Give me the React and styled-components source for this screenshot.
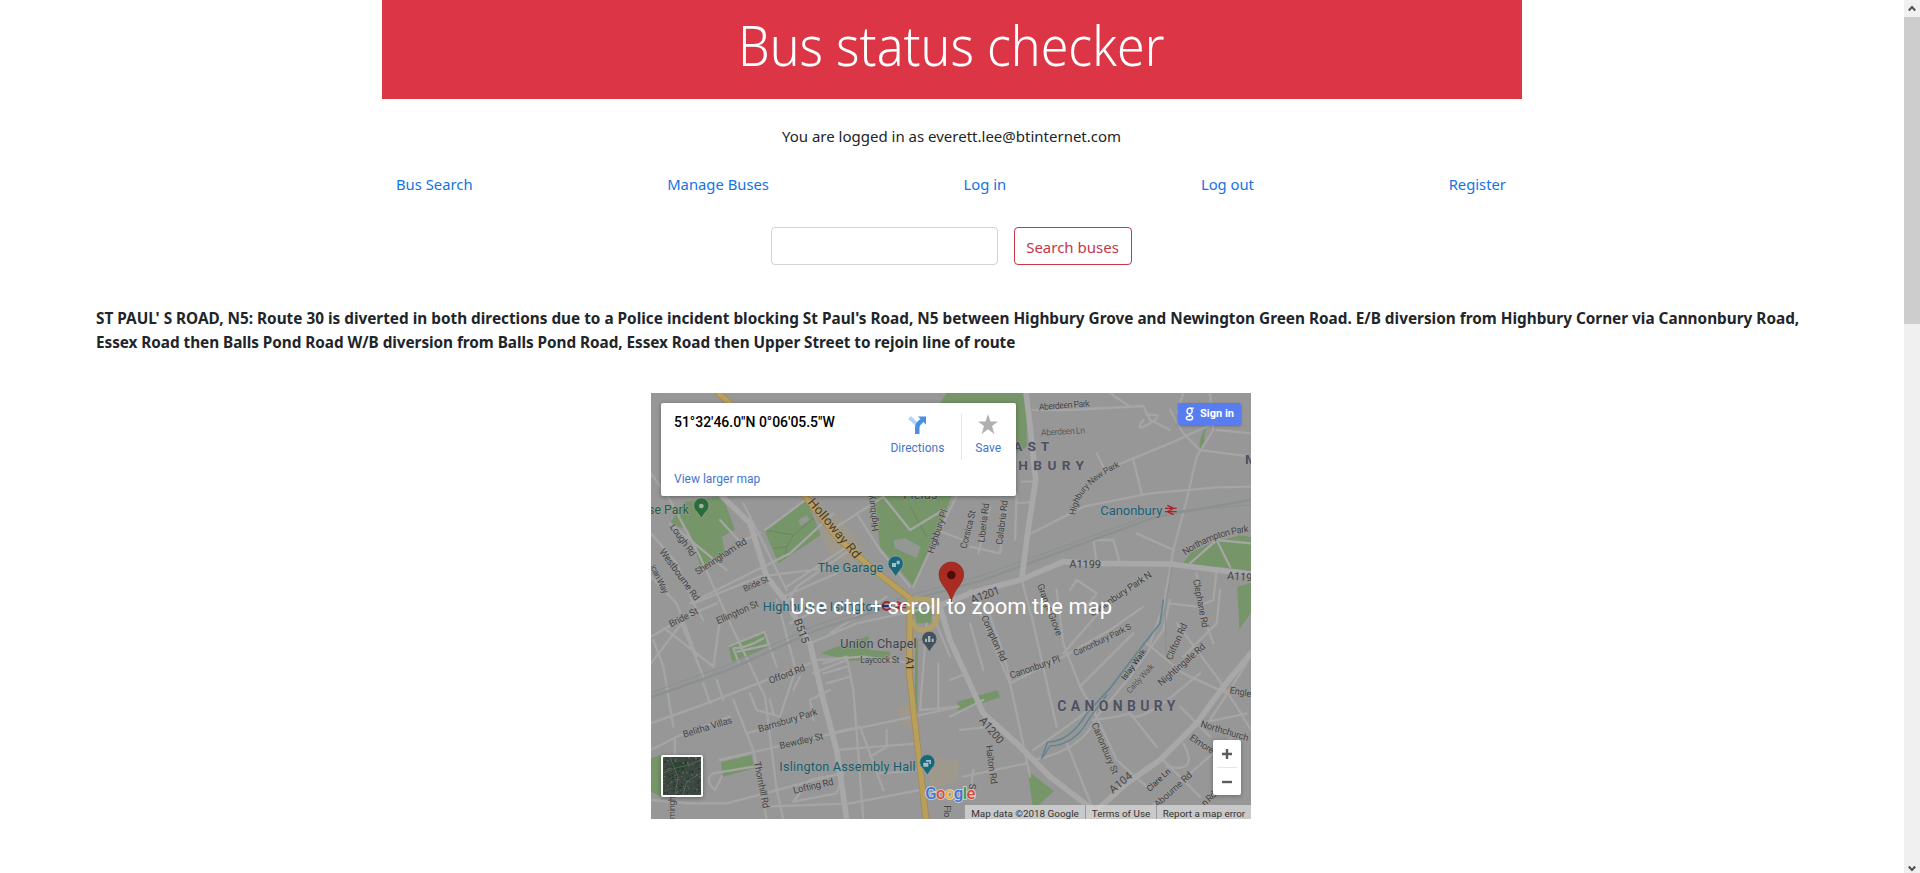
import React from 'react';
import styled, { createGlobalStyle } from 'styled-components';

const GlobalStyle = createGlobalStyle`
  * { box-sizing: border-box; }
  html, body { margin: 0; height: 100%; overflow: hidden; background: #fff; }
  body { font-family: 'Noto Sans', 'Open Sans', sans-serif; font-size: 15px; line-height: 24px; color: #212529; }
`;

const Page = styled.div`
  display: grid;
  grid-template-columns: 1fr 16px;
  height: 873px;
`;
const Content = styled.main`
  display: flex;
  flex-direction: column;
  align-items: center;
`;
const Banner = styled.header`
  width: 1140px;
  height: 99px;
  background: #dc3545;
  color: #fff;
  display: flex;
  justify-content: center;
`;
const Title = styled.h1`
  margin: 0 2px 0 0;
  padding-top: 11px;
  font-size: 56px;
  font-weight: 300;
  line-height: 67px;
  white-space: nowrap;
  transform: scaleX(0.895);
`;
const LoginStatus = styled.p`
  margin: 25px 1px 24px 0;
`;
const Nav = styled.nav`
  width: 1140px;
  padding: 0 16px 0 14px;
  display: flex;
  justify-content: space-between;
`;
const NavLink = styled.a`
  color: #1373e6;
  font-size: 14.8px;
  text-decoration: none;
`;
const SearchForm = styled.form`
  display: flex;
  gap: 16px;
  margin: 31px 2px 0 0;
`;
const SearchInput = styled.input`
  width: 227px;
  height: 38px;
  border: 1px solid #ced4da;
  border-radius: 4px;
  padding: 6px 12px;
  font: inherit;
`;
const SearchButton = styled.button`
  width: 118px;
  height: 38px;
  padding: 1px 0 0;
  border: 1px solid #c83448;
  border-radius: 4px;
  background: transparent;
  color: #c83448;
  font: inherit;
  white-space: nowrap;
`;
const Disruption = styled.p`
  width: 1712px;
  margin: 41px 0 39px;
  font-size: 15.33px;
  font-weight: 700;
`;
const Diversion = styled.span`
  letter-spacing: -0.055px;
`;
const MapFrame = styled.section`
  position: relative;
  margin-right: 2px;
  width: 600px;
  height: 426px;
  overflow: hidden;
  background: #979797;
  font-family: Roboto, sans-serif;
`;
const MapDrawing = styled.svg`
  display: block;
  width: 600px;
  height: 426px;
`;
const ScrollHint = styled.div`
  position: absolute;
  inset: 0;
  display: flex;
  align-items: center;
  justify-content: center;
  padding-top: 1px;
  color: #fff;
  font-size: 22px;
  white-space: nowrap;
`;
const InfoCard = styled.div`
  position: absolute;
  left: 10px;
  top: 10px;
  width: 355px;
  height: 93px;
  padding: 11px 13px 9px;
  display: flex;
  justify-content: space-between;
  background: #fff;
  border-radius: 2px;
  box-shadow: 0 1px 4px rgba(0, 0, 0, 0.35);
`;
const PlaceColumn = styled.div`
  display: flex;
  flex-direction: column;
  justify-content: space-between;
`;
const PlaceName = styled.div`
  font-size: 14px;
  font-weight: 500;
  line-height: 17px;
  letter-spacing: -0.02px;
  color: #000;
`;
const CardLink = styled.a`
  font-size: 12px;
  line-height: 16px;
  color: #3f76d0;
`;
const Actions = styled.div`
  display: flex;
  height: 46px;
`;
const Action = styled.div`
  display: flex;
  flex-direction: column;
  align-items: center;
  gap: 4px;
  padding-left: ${p => (p.$divided ? '13px' : '0')};
  margin-left: ${p => (p.$divided ? '17px' : '0')};
  border-left: ${p => (p.$divided ? '1px solid #e5e5e5' : 'none')};
  margin-right: ${p => (p.$divided ? '2px' : '0')};
`;
const SignIn = styled.div`
  position: absolute;
  right: 10px;
  top: 10px;
  width: 63px;
  height: 22px;
  display: flex;
  align-items: center;
  justify-content: center;
  gap: 5px;
  background: #587df0;
  border-radius: 2px;
  box-shadow: 0 1px 3px rgba(0, 0, 0, 0.3);
  color: #fff;
  font-size: 11px;
  font-weight: 700;
`;
const ZoomControl = styled.div`
  position: absolute;
  right: 10px;
  bottom: 24px;
  width: 28px;
  height: 55px;
  display: flex;
  flex-direction: column;
  align-items: center;
  background: #fff;
  border-radius: 2px;
  box-shadow: 0 1px 4px rgba(0, 0, 0, 0.3);
`;
const ZoomStep = styled.div`
  width: 20px;
  height: 27px;
  display: flex;
  align-items: center;
  justify-content: center;
  & + & { border-top: 1px solid #e6e6e6; height: 28px; }
`;
const SatelliteToggle = styled.div`
  position: absolute;
  left: 10px;
  bottom: 22px;
  width: 42px;
  height: 42px;
  border: 2px solid #fff;
  border-radius: 2px;
  box-shadow: 0 1px 4px rgba(0, 0, 0, 0.35);
  svg { display: block; width: 38px; height: 38px; }
`;
const Attribution = styled.div`
  position: absolute;
  right: 0;
  bottom: 0;
  height: 14px;
  width: 286px;
  display: flex;
  background: rgba(210, 210, 210, 0.86);
  color: #333;
  font-size: 9.9px;
  line-height: 17px;
  white-space: nowrap;
`;
const Credit = styled.span`
  width: ${p => p.$w}px;
  text-align: center;
  & + & { border-left: 1px solid #999; }
`;
const Scrollbar = styled.aside`
  display: flex;
  flex-direction: column;
  background: #f0f0f0;
`;
const ScrollArrow = styled.div`
  height: ${p => (p.$down ? '8px' : '17px')};
  display: flex;
  align-items: center;
  justify-content: center;
  transform: ${p => (p.$down ? 'scaleY(-1)' : 'none')};
`;
const ScrollTrack = styled.div`
  flex: 1;
`;
const ScrollThumb = styled.div`
  height: 307px;
  background: #cdcdcd;
`;

const parks = [
  'M105 335L218 318L255 420L215 440L228 500L150 525L115 420L60 400Z',
  'M343 420L470 330L512 435L385 520Z',
  'M672 318H905L850 460L790 588L690 470Z',
  'M890 9H1130V170L1098 190V40H870Z',
  'M1650 150L1668 105L1660 170L1648 185Z',
  'M1600 520L1620 490L1680 460L1770 436L1803 442V542L1700 530Z',
  'M1762 590L1803 578V668L1768 718Z',
  'M235 765L345 722L352 772L247 815Z',
  'M512 790Q560 770 655 738L660 780L722 785L715 808L600 812Z',
  'M213 1117L305 1095L312 1135L220 1160Z',
  'M3 1105L35 1095V1222L3 1205Z',
  'M922 935L1042 900L1050 922L925 962Z',
  'M1133 1142L1212 1203L1150 1260Z',
  'M790 650L848 655L842 700L800 700Z',
];

const majorRoads = [
  'M215 318L300 400L350 560L412 640L480 760L520 930L560 1080L590 1287',
  'M1128 9L1142 120L1157 270L1130 450L1115 570',
  'M860 650L960 610L1110 570L1240 515L1330 520L1560 522L1700 540L1803 552',
  'M870 650L900 750L950 860L1000 970L1100 1060L1200 1160L1330 1260',
  'M1310 1287L1430 1180L1530 1110L1640 1000L1720 890L1803 790',
];

const roads = [
  'M1680 9L1690 120L1640 200L1610 330L1570 480L1540 650L1500 760',
  'M1145 430L1300 350L1500 310L1700 292L1803 290',
  'M1390 230L1560 160L1690 100M1560 60L1600 130L1650 180L1803 200',
  'M1150 60L1260 60L1480 48L1500 90L1560 120M1700 120L1803 130',
  'M1480 90Q1450 130 1500 100T1490 75M1380 9L1440 50M1600 9L1580 70',
  'M1450 210L1475 310M1340 190L1370 250',
  'M3 250L60 330L150 500L250 720L345 920L380 1200L400 1287',
  'M3 430L80 520L130 640L160 690M3 560L80 640L140 800',
  'M60 400L230 540M120 640L420 490L550 370',
  'M345 420L480 320M280 340L410 600M210 390L270 455L330 430',
  'M130 640L330 560L560 530M410 590L590 470M400 620L560 550',
  'M545 420L700 320M790 590L850 460L920 318M700 320L780 420L880 360',
  'M620 370L690 480L780 590M940 450L860 420M960 470L1050 490L1070 350',
  'M985 490L1020 350M1100 310L1095 450M1115 275H1155M1100 340L1150 335',
  'M3 820L110 680L200 640M3 740L90 690L160 860M50 720L190 830L210 690',
  'M3 1000L170 940L400 850L480 820M3 1080L80 1040L240 980',
  'M70 1010L40 830L10 750M75 1050L70 1287M160 880L180 940M200 870L220 930',
  'M250 930L310 1080L350 1287M210 1110L550 1030L790 980L925 950',
  'M290 1030L500 970M215 1160L195 1200Q160 1170 190 1150L310 1130',
  'M100 1240L230 1240L570 1150M3 1230L130 1240M350 1250L600 1240L810 1200',
  'M410 640L440 590L600 480M480 760L620 700L850 650M540 730L710 620',
  'M500 810L640 800L790 820M490 850L590 810M610 900L640 1287',
  'M540 1030L630 1010L700 1200M560 1080L680 1070L810 1060M690 1150L820 1140',
  'M830 700L810 960L925 950M850 680L900 800M865 820V960M900 870L950 850',
  'M660 1100L710 1070V1020M480 1170L580 1150L560 1210L430 1235Z',
  'M960 600L1080 880L1100 970L1140 1160M960 700L1000 840M900 980L1000 930',
  'M1080 880L1240 800L1380 720L1480 650M1080 870L1060 790L1010 650',
  'M1115 570L1150 700L1220 1010M1220 600L1240 760L1290 890L1330 960L1400 1110L1490 1190',
  'M1220 660L1170 640M1290 890L1450 730M1240 790L1380 630L1500 560',
  'M1260 600L1280 570L1340 610L1310 650M1340 520L1330 450L1390 450L1410 520',
  'M1150 1080L1250 1010L1330 950M1580 700L1700 860L1760 950L1803 1020',
  'M1150 1110Q1300 1080 1340 980L1440 860L1540 720L1560 630',
  'M1250 1060L1330 1260M1470 1280L1620 1150L1760 1030M1540 1110L1650 1220M1680 990L1790 820',
  'M1490 760L1600 850L1730 910M1440 970Q1450 1000 1540 940L1650 850',
  'M1640 550L1660 680L1690 760M1700 540L1690 630L1640 650L1560 640',
  'M1570 480L1460 430M1620 520L1700 450L1740 530M1700 450L1803 460',
  'M1600 800L1700 700L1710 600M1650 1000L1790 970M1590 950L1680 1040',
  'M1330 990L1400 980L1440 970L1520 1070M1550 1130Q1650 1150 1600 1060',
  'M940 1160L1130 1120M930 1020L1020 1010M960 1220L970 1140',
  'M420 700L500 660M520 820L590 800L610 900M520 850L590 830M530 880L600 860',
  'M300 910L320 960L390 980L430 860M370 970L360 930M450 860L430 900',
  'M380 630L400 700L440 850M345 730L380 830M490 990L480 930L540 900',
  'M238 768L345 725M265 815L250 775Q290 775 340 745M262 785L352 765',
];

const labels = [
  { t: 'se Park', x: -6, y: 372, w: 123, s: 37, c: '#285f37' },
  { t: 'Lough Rd', x: 58, y: 411, w: 112, r: 54 },
  { t: 'Sheringham Rd', x: 143, y: 556, w: 178, r: -33 },
  { t: 'Westbourne Rd', x: 27, y: 485, w: 184, r: 54 },
  { t: 'ican Way', x: 0, y: 530, w: 92, r: 64, s: 26 },
  { t: 'Bride St', x: 284, y: 606, w: 80, r: -24, s: 26 },
  { t: 'Highbury', x: 686, y: 422, w: 108, r: -98 },
  { t: 'Fields', x: 760, y: 326, w: 102, s: 37, c: '#2f4c32' },
  { t: 'Highbury Pl', x: 850, y: 492, w: 137, r: -72 },
  { t: 'Corsica St', x: 949, y: 478, w: 118, r: -76 },
  { t: 'Liberia Rd', x: 1003, y: 458, w: 118, r: -83 },
  { t: 'Calabria Rd', x: 1057, y: 465, w: 134, r: -83 },
  { t: 'Aberdeen Park', x: 1167, y: 60, w: 153, r: -4, s: 27 },
  { t: 'Aberdeen Ln', x: 1173, y: 137, w: 133, r: -3, c: '#555', s: 27 },
  { t: 'EAST', x: 1052, y: 184, w: 146, s: 41, b: 700, c: '#4e5163' },
  { t: 'HIGHBURY', x: 988, y: 240, w: 314, s: 41, b: 700, c: '#4e5163' },
  { t: 'M', x: 1785, y: 223, s: 41, b: 700, c: '#4e5163' },
  { t: 'The Garage', x: 503, y: 547, w: 197, s: 38, c: '#155d6b' },
  { t: 'Canonbury', x: 1351, y: 374, w: 186, s: 39, c: '#176079' },
  { t: 'Holloway Rd', x: 472, y: 338, w: 222, r: 50, s: 39, c: '#493d2a', h: '#b3a078' },
  { t: 'A1199', x: 1258, y: 533, w: 95, r: 1, s: 33 },
  { t: 'A119', x: 1730, y: 568, w: 76, r: 5, s: 33 },
  { t: 'A1201', x: 967, y: 641, w: 90, r: -20, s: 33 },
  { t: 'Canonbury Park N', x: 1327, y: 680, w: 217, r: -34 },
  { t: 'Grange Grove', x: 1161, y: 586, w: 164, r: 69 },
  { t: 'Clephane Rd', x: 1629, y: 570, w: 147, r: 79 },
  { t: 'Bride St', x: 63, y: 712, w: 94, r: -27 },
  { t: 'Ellington St', x: 204, y: 703, w: 136, r: -24 },
  { t: 'Highbury & Islington', x: 338, y: 662, w: 352, s: 38, c: '#165b70' },
  { t: 'B515', x: 431, y: 691, w: 76, r: 70, s: 33 },
  { t: 'Union Chapel', x: 571, y: 773, w: 229, s: 38, c: '#3c444d' },
  { t: 'Laycock St', x: 631, y: 820, w: 117, s: 26 },
  { t: 'A1', x: 767, y: 800, w: 42, r: 90, s: 35, c: '#40351f', h: '#b3a078' },
  { t: 'Offord Rd', x: 361, y: 882, w: 114, r: -21 },
  { t: 'Belitha Villas', x: 102, y: 1043, w: 153, r: -17 },
  { t: 'Barnsbury Park', x: 328, y: 1027, w: 184, r: -17 },
  { t: 'Bewdley St', x: 391, y: 1077, w: 134, r: -13 },
  { t: 'Islington Assembly Hall', x: 388, y: 1142, w: 409, s: 38, c: '#155d6b' },
  { t: 'Lofting Rd', x: 432, y: 1211, w: 123, r: -13 },
  { t: 'Thornhill Rd', x: 312, y: 1117, w: 142, r: 79 },
  { t: 'mingh', x: 74, y: 1288, w: 70, r: -90 },
  { t: 'Flo', x: 881, y: 1246, w: 36, r: 90 },
  { t: 'Compton Rd', x: 993, y: 681, w: 148, r: 66 },
  { t: 'Canonbury Pl', x: 1083, y: 866, w: 158, r: -19 },
  { t: 'Canonbury Park S', x: 1275, y: 799, w: 190, r: -26, s: 26 },
  { t: 'Clifton Rd', x: 1565, y: 812, w: 117, r: -66 },
  { t: 'Islay Walk', x: 1426, y: 872, w: 108, r: -54, c: '#303030', s: 25 },
  { t: 'Caldy Walk', x: 1440, y: 912, w: 110, r: -48, c: '#555', s: 25 },
  { t: 'Nightingale Rd', x: 1534, y: 889, w: 178, r: -41 },
  { t: 'CANONBURY', x: 1222, y: 964, w: 354, s: 42, b: 700, c: '#4e5163' },
  { t: 'Engle', x: 1738, y: 909, w: 65, r: 11 },
  { t: 'Northchurch', x: 1650, y: 1010, w: 149, r: 17 },
  { t: 'Elmore', x: 1617, y: 1048, w: 81, r: 33 },
  { t: 'Canonbury St', x: 1324, y: 1003, w: 165, r: 67 },
  { t: 'A1200', x: 986, y: 992, w: 94, r: 50, s: 33 },
  { t: 'Halton Rd', x: 1007, y: 1067, w: 117, r: 82 },
  { t: 'A104', x: 1388, y: 1211, w: 79, r: -39, s: 33 },
  { t: 'Clare Ln', x: 1499, y: 1206, w: 88, r: -43, c: '#303030', s: 25 },
  { t: 'Abourne Rd', x: 1523, y: 1253, w: 142, r: -42 },
  { t: 'n Rd', x: 1665, y: 1250, w: 50, r: -44 },
  { t: 'S', x: 956, y: 1181, r: 90 },
];

const googleLetters = [
  ['G', '#3b73d9'], ['o', '#d94a3d'], ['o', '#e2b32c'], ['g', '#3b73d9'], ['l', '#369950'], ['e', '#d94a3d'],
];

function MapLabel({ t, x, y, w, r = 0, s = 28.5, c = '#444', b = 400, h = '#9d9d9d' }) {
  return (
    <text
      transform={`translate(${x} ${y}) rotate(${r})`}
      fontSize={s}
      fontWeight={b}
      fill={c}
      stroke={h}
      strokeWidth="4"
      strokeLinejoin="round"
      paintOrder="stroke"
      textLength={w}
    >
      {t}
    </text>
  );
}

function PoiPin({ x, y, color, children }) {
  return (
    <g transform={`translate(${x} ${y})`}>
      <path d="M0 34L-14 14A23 23 0 1 1 14 14Z" fill={color} stroke="#a5a5a5" strokeWidth="2" />
      {children}
    </g>
  );
}

function MapArtwork() {
  return (
    <MapDrawing viewBox="3 9 1800 1278" fontFamily="Roboto, sans-serif">
      <rect x="3" y="9" width="1800" height="1278" fill="#979797" />
      <path d="M510 430L560 370L640 480L600 520L540 490ZM740 950L790 940L800 1000L760 1010ZM830 1100L925 1110V1170L840 1200Z" fill="#9f988d" />
      {parks.map(d => <path key={d} d={d} fill="#769569" />)}
      <path d="M730 450L765 445L812 470L800 505L735 475ZM445 390L470 375L480 390L452 408Z" fill="#939893" />
      <g fill="none" strokeLinejoin="round" strokeLinecap="round">
        <path d="M800 750L798 960" stroke="#769569" strokeWidth="8" />
        <path d="M345 420L430 435L490 385M370 475L410 470L430 435M410 470L405 505M780 350L830 440" stroke="#618255" strokeWidth="2" />
        {roads.map(d => <path key={d} d={d} stroke="#a5a5a5" strokeWidth="7" />)}
        <path d="M3 922L240 838L500 720L800 625L1000 570L1300 460L1520 380L1803 330" stroke="#8b9091" strokeWidth="7" />
        <path d="M3 908L240 822L500 705L800 610L1000 555L1300 448L1520 368L1803 345M1550 800L1545 660L1565 530" stroke="#8b9091" strokeWidth="3" />
        {majorRoads.map(d => <path key={d} d={d} stroke="#a8a8a8" strokeWidth="17" />)}
        <path d="M1175 1105L1193 1056Q1260 1055 1310 970L1380 895L1460 790L1530 700L1540 630" stroke="#648492" strokeWidth="5" />
        <path d="M1180 1100L1200 1068Q1275 1065 1318 985L1370 915" stroke="#648492" strokeWidth="4" />
        <path d="M205 9L280 75L470 325L560 440L660 530L780 625L778 850L795 1000L828 1287" stroke="#a28a58" strokeWidth="20" />
        <path d="M205 9L280 75L470 325L560 440L660 530L780 625L778 850L795 1000L828 1287" stroke="#b99f5a" strokeWidth="15" />
        <path d="M780 630Q830 620 862 640Q870 700 835 718Q800 730 782 690" stroke="#b3a064" strokeWidth="14" />
      </g>
      {labels.map((l, i) => <MapLabel key={i} {...l} />)}
      <g fontSize="28.5" fill="#444" stroke="#9d9d9d" strokeWidth="4" paintOrder="stroke">
        <path id="newParkCurve" d="M1276 376Q1285 285 1418 226" fill="none" stroke="none" />
        <path id="northamptonCurve" d="M1606 497Q1690 435 1804 425" fill="none" stroke="none" />
        <text fontSize="26" textLength="208"><textPath href="#newParkCurve">Highbury New Park</textPath></text>
        <text textLength="206"><textPath href="#northamptonCurve">Northampton Park</textPath></text>
      </g>
      <PoiPin x={154} y={351} color="#2c6c3b"><circle cy="-3" r="7" fill="#a5b3a5" /></PoiPin>
      <PoiPin x={737} y={525} color="#176878">
        <path d="M-11 -6H1V6H-11ZM3 -13H12V-2H3Z" fill="#a5c0c4" />
      </PoiPin>
      <PoiPin x={838} y={751} color="#44525d">
        <path d="M-13 5V-5H-7V5ZM-4 5V-13H3V5ZM7 5V-5H13V5Z" fill="#adb6bd" />
      </PoiPin>
      <PoiPin x={832} y={1121} color="#176878">
        <path d="M-12 -3H3V9H-12ZM-4 -11H11V1H6V-6H-4Z" fill="#a5c0c4" />
      </PoiPin>
      <g fill="none" stroke="#a8242d" strokeWidth="4">
        <path d="M1545 355H1580M1545 365H1580M1552 346L1571 355L1552 365L1571 374" />
        <circle cx="710" cy="648" r="12" strokeWidth="6" />
        <path d="M694 648H726" stroke="#222d70" strokeWidth="6" />
        <path d="M734 643H768M734 653H768M741 635L760 643L741 653L760 661" />
      </g>
      <path d="M904 636C900 600 867 584 867 553A37 37 0 1 1 941 553C941 584 908 600 904 636Z" fill="#a82c22" stroke="#8e251e" strokeWidth="2" />
      <circle cx="904" cy="555" r="13" fill="#4d0d09" />
      <text x="826" y="1226" fontSize="50" fontWeight="500" textLength="150" stroke="#d6d6d6" strokeWidth="5" paintOrder="stroke">
        {googleLetters.map(([ch, color], i) => <tspan key={i} fill={color}>{ch}</tspan>)}
      </text>
    </MapDrawing>
  );
}

const speckles = Array.from({ length: 170 }, (_, i) => ({
  x: (i * 17 + (i * i) % 7) % 38,
  y: (i * 11 + (i * i) % 13) % 38,
  fill: ['#59655d', '#27372c', '#5b635c', '#3a4942', '#223a26'][i % 5],
}));

function SatelliteThumbnail() {
  return (
    <svg viewBox="0 0 38 38">
      <rect width="38" height="38" fill="#3b4740" />
      {speckles.map((s, i) => <rect key={i} x={s.x} y={s.y} width="1.6" height="1.3" fill={s.fill} />)}
      <path d="M8 8Q15 2 22 8L18 14L9 13Z" fill="#24452a" opacity=".7" />
      <path d="M0 16L13 11L25 8L38 3M12 38L15 20L7 0M20 38L24 24L38 16" fill="none" stroke="#647067" strokeWidth=".7" />
    </svg>
  );
}

const links = ['Bus Search', 'Manage Buses', 'Log in', 'Log out', 'Register'];

function Chevron() {
  return (
    <svg width="8" height="7" viewBox="0 0 8 7">
      <path d="M0.8 5.5L4 2L7.2 5.5" fill="none" stroke="#505050" strokeWidth="2" />
    </svg>
  );
}

export default function App() {
  return (
    <Page>
      <GlobalStyle />
      <Content>
        <Banner><Title>Bus status checker</Title></Banner>
        <LoginStatus>You are logged in as everett.lee@btinternet.com</LoginStatus>
        <Nav>{links.map(l => <NavLink key={l}>{l}</NavLink>)}</Nav>
        <SearchForm>
          <SearchInput aria-label="Bus" />
          <SearchButton type="button">Search buses</SearchButton>
        </SearchForm>
        <Disruption>
          ST PAUL' S ROAD, N5: Route 30 is diverted in both directions due to a Police incident blocking St Paul's
          Road, N5 between Highbury Grove and Newington Green Road. E/B diversion from Highbury Corner via Cannonbury
          Road,{' '}
          <Diversion>
            Essex Road then Balls Pond Road W/B diversion from Balls Pond Road, Essex Road then Upper Street to
            rejoin line of route
          </Diversion>
        </Disruption>
        <MapFrame>
          <MapArtwork />
          <ScrollHint>Use ctrl + scroll to zoom the map</ScrollHint>
          <InfoCard>
            <PlaceColumn>
              <PlaceName>51°32'46.0"N 0°06'05.5"W</PlaceName>
              <CardLink>View larger map</CardLink>
            </PlaceColumn>
            <Actions>
              <Action>
                <svg width="22" height="22" viewBox="0 0 22 22">
                  <path d="M2 5L5 2L11 8V13Z" fill="#b4d3f6" />
                  <path d="M9 20V13Q9 10 12 7L14.5 5L12 2.500H20V10.500L17.500 8L14.500 11Q13.500 12 13.500 14V20Z" fill="#4a90e2" />
                </svg>
                <CardLink>Directions</CardLink>
              </Action>
              <Action $divided>
                <svg width="22" height="22" viewBox="0 0 22 22">
                  <path d="M11 0L13.500 7.500H21L15 12L17.300 20L11 15.300L4.700 20L7 12L1 7.500H8.500Z" fill="#b0b0b0" />
                </svg>
                <CardLink>Save</CardLink>
              </Action>
            </Actions>
          </InfoCard>
          <SignIn>
            <svg width="10" height="14" viewBox="0 0 10 14" fill="none" stroke="#fff" strokeWidth="1.400">
              <ellipse cx="4.600" cy="4" rx="2.600" ry="2.900" />
              <path d="M4.500 1.100H8.800M5.500 6.800Q3.500 8 5.500 8.700Q8 9.600 7.700 11Q7.200 13 4.500 13Q1.300 13 1.300 11Q1.300 9.300 5 9" />
            </svg>
            Sign in
          </SignIn>
          <SatelliteToggle><SatelliteThumbnail /></SatelliteToggle>
          <ZoomControl>
            <ZoomStep><svg width="10" height="10"><path d="M0 5H10M5 0V10" stroke="#5c5c5c" strokeWidth="2.400" /></svg></ZoomStep>
            <ZoomStep><svg width="10" height="10"><path d="M0 5H10" stroke="#5c5c5c" strokeWidth="2.400" /></svg></ZoomStep>
          </ZoomControl>
          <Attribution>
            <Credit $w={120}>Map data ©2018 Google</Credit>
            <Credit $w={71}>Terms of Use</Credit>
            <Credit $w={95}>Report a map error</Credit>
          </Attribution>
        </MapFrame>
      </Content>
      <Scrollbar>
        <ScrollArrow><Chevron /></ScrollArrow>
        <ScrollTrack><ScrollThumb /></ScrollTrack>
        <ScrollArrow $down><Chevron /></ScrollArrow>
      </Scrollbar>
    </Page>
  );
}
